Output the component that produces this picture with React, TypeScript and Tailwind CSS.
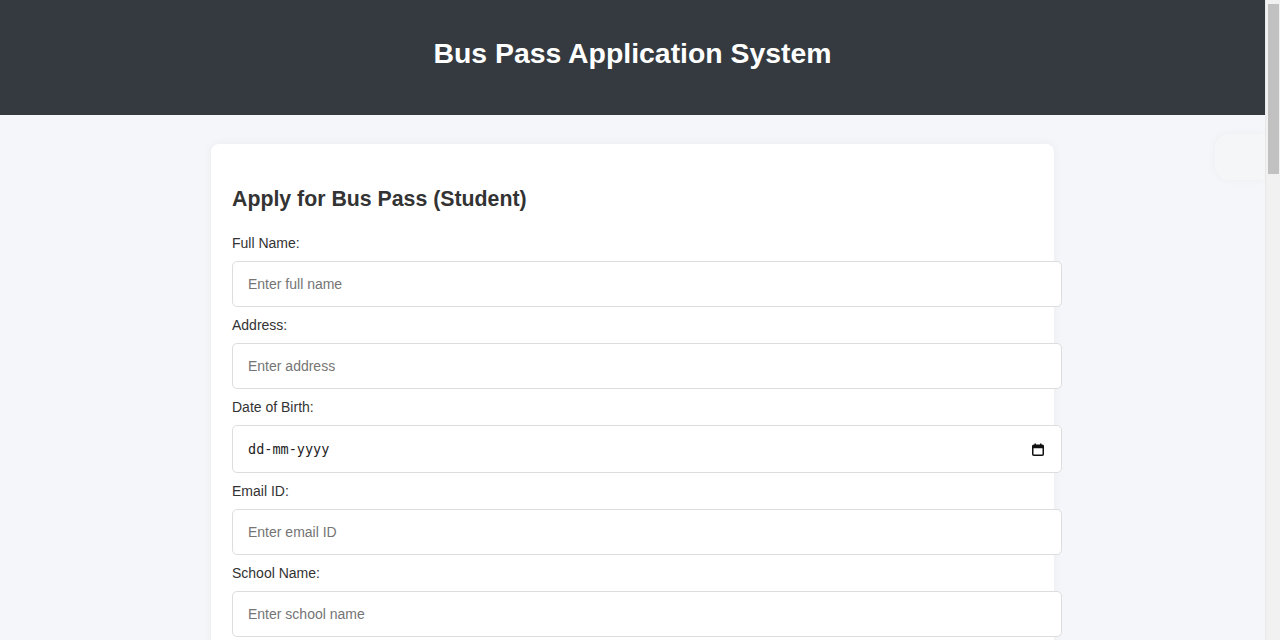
import React from "react";

const fields = [
  { label: "Full Name:", placeholder: "Enter full name" },
  { label: "Address:", placeholder: "Enter address" },
  { label: "Date of Birth:", date: true },
  { label: "Email ID:", placeholder: "Enter email ID" },
  { label: "School Name:", placeholder: "Enter school name" },
];

function CalendarIcon() {
  return (
    <svg width="12" height="13" viewBox="0 0 12 13" className="shrink-0">
      <rect x="0.75" y="2.25" width="10.5" height="10" rx="1" fill="none" stroke="#111" strokeWidth="1.5" />
      <rect x="0.75" y="2.25" width="10.5" height="3" fill="#111" />
      <rect x="2.5" y="0.5" width="1.5" height="2.5" fill="#111" />
      <rect x="8" y="0.5" width="1.5" height="2.5" fill="#111" />
    </svg>
  );
}

export default function App() {
  return (
    <div className="flex h-[640px] w-[1280px] overflow-hidden bg-[#f4f6f9] font-['Liberation_Sans',Arial,sans-serif]">
      <div className="relative flex min-w-0 flex-1 flex-col overflow-hidden">
        <header className="flex h-[115px] shrink-0 items-center justify-center bg-[#343a40] pb-[9px]">
          <h1 className="text-[28.4px] font-bold leading-[32px] text-white">Bus Pass Application System</h1>
        </header>
        <main className="flex justify-center pt-[29px]">
          <div className="w-[843px] shrink-0 rounded-[8px] bg-white px-[21px] pt-[21px] pb-[40px] shadow-[0_0_10px_rgba(0,0,0,0.05)]">
            <h2 className="mt-[22px] mb-[23px] text-[21.3px] font-bold leading-[25px] text-[#333]">
              Apply for Bus Pass (Student)
            </h2>
            {fields.map((f, i) => (
              <div key={i} className="flex flex-col">
                <label className="mb-[10px] text-[14px] leading-[16px] text-[#333]">{f.label}</label>
                {f.date ? (
                  <div className="mb-[10px] flex h-[48px] w-[830px] items-center justify-between rounded-[5px] border border-[#dddddd] bg-white pl-[15px] pr-[17px]">
                    <span className="font-['DejaVu_Sans_Mono',monospace] text-[13.5px] text-[#222]">dd-mm-yyyy</span>
                    <CalendarIcon />
                  </div>
                ) : (
                  <input
                    type="text"
                    placeholder={f.placeholder}
                    className="mb-[10px] h-[46px] w-[830px] rounded-[5px] border border-[#dddddd] bg-white px-[15px] text-[14px] text-[#333] outline-none placeholder:text-[#757575]"
                  />
                )}
              </div>
            ))}
          </div>
        </main>
        <div className="absolute right-0 top-[134px] h-[46px] w-[50px] rounded-l-[14px] bg-[#f5f6f8] shadow-[0_0_8px_rgba(0,0,0,0.04)]" />
      </div>
      <div className="flex w-[15px] shrink-0 justify-center border-l border-[#e8e8e8] bg-[#f1f1f1] pt-[4px]">
        <div className="h-[170px] w-[11px] bg-[#c1c1c1]" />
      </div>
    </div>
  );
}
